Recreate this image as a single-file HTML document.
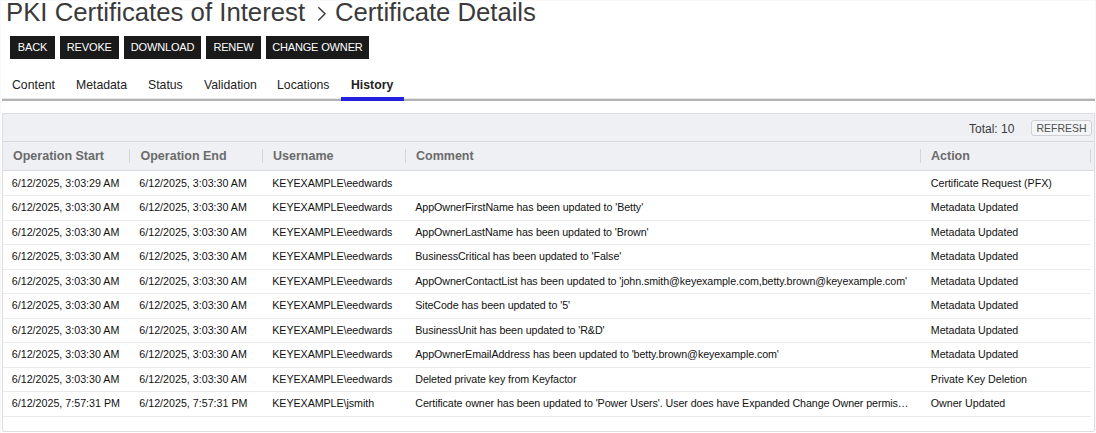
<!DOCTYPE html>
<html><head><meta charset="utf-8">
<style>
*{box-sizing:border-box;margin:0;padding:0}
html,body{width:1096px;height:433px;overflow:hidden;background:#fff}
.edge{position:absolute;left:0;top:0;width:1096px;height:433px;border-left:1px solid #f8f8f8;border-top:1px solid #f9f9f9;border-right:1px solid #f8f8f8}
body{font-family:"Liberation Sans",sans-serif;color:#222;position:relative}
.abs{position:absolute;white-space:nowrap}
.title{top:-3px;font-size:25.75px;color:#3a3a3a;line-height:30px}
.btn{position:absolute;top:36px;height:23px;background:#1a1a1a;color:#fff;font-size:11px;line-height:23px;text-align:center;letter-spacing:-0.15px}
.tab{position:absolute;top:77px;font-size:12.25px;color:#222;line-height:16px}
.tabline{position:absolute;left:2px;top:99px;width:1093px;height:2px;background:#b2b2b2;box-shadow:0 -1px 0 #e6e6e6}
.tabsel{position:absolute;left:341px;top:97px;width:63px;height:4px;background:#2222dd}
.panel{position:absolute;left:2px;top:113px;width:1093px;height:319px;border:1px solid #dcdde1;border-radius:0 0 2px 2px;background:#fff}
.toolbar{position:absolute;left:0;top:0;width:100%;height:28px;background:#eff0f4;border-bottom:1px solid #d8d9dd}
.head{position:absolute;left:0;top:28px;width:100%;height:29px;background:#eff0f4;border-bottom:1px solid #d8d9dd}
.hc{position:absolute;top:6px;font-size:12.5px;font-weight:bold;color:#6b6b6b;line-height:16px}
.sep{position:absolute;top:7px;width:1px;height:14px;background:#d4d5d9}
.row{position:absolute;left:0;width:1088px;height:24.4px;border-bottom:1px solid #eaebee}
.c{position:absolute;top:4.2px;font-size:10.7px;color:#111;line-height:14px}
.cm{letter-spacing:-0.085px}
.ac{letter-spacing:-0.03px}
.us{letter-spacing:-0.06px}
.refresh{position:absolute;left:1028px;top:5.5px;width:61px;height:16px;border:1px solid #d0d1d5;border-radius:3px;background:#f4f5f8;font-size:10.5px;color:#505050;text-align:center;line-height:14px}
.total{position:absolute;left:966px;top:8px;font-size:12px;color:#3a3a3a;line-height:14px}
</style></head><body>
<div class="edge"></div>
<div class="abs title" style="left:6px">PKI Certificates of Interest</div>
<svg class="abs" style="left:316px;top:6px" width="12" height="16" viewBox="0 0 12 16"><polyline points="2.3,1.2 9.0,7.8 2.3,14.4" fill="none" stroke="#3a3a3a" stroke-width="1.4"/></svg>
<div class="abs title" style="left:335px;letter-spacing:-0.05px">Certificate Details</div>

<div class="btn" style="left:10px;width:45px">BACK</div>
<div class="btn" style="left:59.6px;width:59.4px">REVOKE</div>
<div class="btn" style="left:123.7px;width:77.7px">DOWNLOAD</div>
<div class="btn" style="left:206.2px;width:54.6px">RENEW</div>
<div class="btn" style="left:265.7px;width:103.4px">CHANGE OWNER</div>

<div class="tab" style="left:12px">Content</div>
<div class="tab" style="left:76px">Metadata</div>
<div class="tab" style="left:148px">Status</div>
<div class="tab" style="left:204px">Validation</div>
<div class="tab" style="left:277px">Locations</div>
<div class="tab" style="left:351px;font-weight:bold">History</div>
<div class="tabline"></div>
<div class="tabsel"></div>

<div class="panel">
  <div class="toolbar">
    <div class="total">Total: 10</div>
    <div class="refresh">REFRESH</div>
  </div>
  <div class="head">
    <div class="hc" style="left:10px">Operation Start</div>
    <div class="sep" style="left:126px"></div>
    <div class="hc" style="left:137.5px">Operation End</div>
    <div class="sep" style="left:259px"></div>
    <div class="hc" style="left:270px">Username</div>
    <div class="sep" style="left:402px"></div>
    <div class="hc" style="left:413px">Comment</div>
    <div class="sep" style="left:917px"></div>
    <div class="hc" style="left:928px">Action</div>
    <div class="sep" style="left:1087px"></div>
  </div>
    <div class="row" style="top:57.80px"><div class="c" style="left:8.8px">6/12/2025, 3:03:29 AM</div><div class="c" style="left:136.3px">6/12/2025, 3:03:30 AM</div><div class="c us" style="left:269.3px">KEYEXAMPLE\eedwards</div><div class="c ac" style="left:927.8px">Certificate Request (PFX)</div></div>
  <div class="row" style="top:82.30px"><div class="c" style="left:8.8px">6/12/2025, 3:03:30 AM</div><div class="c" style="left:136.3px">6/12/2025, 3:03:30 AM</div><div class="c us" style="left:269.3px">KEYEXAMPLE\eedwards</div><div class="c cm" style="left:412.3px">AppOwnerFirstName has been updated to 'Betty'</div><div class="c ac" style="left:927.8px">Metadata Updated</div></div>
  <div class="row" style="top:106.80px"><div class="c" style="left:8.8px">6/12/2025, 3:03:30 AM</div><div class="c" style="left:136.3px">6/12/2025, 3:03:30 AM</div><div class="c us" style="left:269.3px">KEYEXAMPLE\eedwards</div><div class="c cm" style="left:412.3px">AppOwnerLastName has been updated to 'Brown'</div><div class="c ac" style="left:927.8px">Metadata Updated</div></div>
  <div class="row" style="top:131.30px"><div class="c" style="left:8.8px">6/12/2025, 3:03:30 AM</div><div class="c" style="left:136.3px">6/12/2025, 3:03:30 AM</div><div class="c us" style="left:269.3px">KEYEXAMPLE\eedwards</div><div class="c cm" style="left:412.3px">BusinessCritical has been updated to 'False'</div><div class="c ac" style="left:927.8px">Metadata Updated</div></div>
  <div class="row" style="top:155.80px"><div class="c" style="left:8.8px">6/12/2025, 3:03:30 AM</div><div class="c" style="left:136.3px">6/12/2025, 3:03:30 AM</div><div class="c us" style="left:269.3px">KEYEXAMPLE\eedwards</div><div class="c cm" style="left:412.3px">AppOwnerContactList has been updated to 'john.smith@keyexample.com,betty.brown@keyexample.com'</div><div class="c ac" style="left:927.8px">Metadata Updated</div></div>
  <div class="row" style="top:180.30px"><div class="c" style="left:8.8px">6/12/2025, 3:03:30 AM</div><div class="c" style="left:136.3px">6/12/2025, 3:03:30 AM</div><div class="c us" style="left:269.3px">KEYEXAMPLE\eedwards</div><div class="c cm" style="left:412.3px">SiteCode has been updated to '5'</div><div class="c ac" style="left:927.8px">Metadata Updated</div></div>
  <div class="row" style="top:204.80px"><div class="c" style="left:8.8px">6/12/2025, 3:03:30 AM</div><div class="c" style="left:136.3px">6/12/2025, 3:03:30 AM</div><div class="c us" style="left:269.3px">KEYEXAMPLE\eedwards</div><div class="c cm" style="left:412.3px">BusinessUnit has been updated to 'R&amp;D'</div><div class="c ac" style="left:927.8px">Metadata Updated</div></div>
  <div class="row" style="top:229.30px"><div class="c" style="left:8.8px">6/12/2025, 3:03:30 AM</div><div class="c" style="left:136.3px">6/12/2025, 3:03:30 AM</div><div class="c us" style="left:269.3px">KEYEXAMPLE\eedwards</div><div class="c cm" style="left:412.3px">AppOwnerEmailAddress has been updated to 'betty.brown@keyexample.com'</div><div class="c ac" style="left:927.8px">Metadata Updated</div></div>
  <div class="row" style="top:253.80px"><div class="c" style="left:8.8px">6/12/2025, 3:03:30 AM</div><div class="c" style="left:136.3px">6/12/2025, 3:03:30 AM</div><div class="c us" style="left:269.3px">KEYEXAMPLE\eedwards</div><div class="c cm" style="left:412.3px">Deleted private key from Keyfactor</div><div class="c ac" style="left:927.8px">Private Key Deletion</div></div>
  <div class="row" style="top:278.30px"><div class="c" style="left:8.8px">6/12/2025, 7:57:31 PM</div><div class="c" style="left:136.3px">6/12/2025, 7:57:31 PM</div><div class="c us" style="left:269.3px">KEYEXAMPLE\jsmith</div><div class="c cm" style="left:412.3px">Certificate owner has been updated to 'Power Users'. User does have Expanded Change Owner permis…</div><div class="c ac" style="left:927.8px">Owner Updated</div></div>
</div>
</body></html>
